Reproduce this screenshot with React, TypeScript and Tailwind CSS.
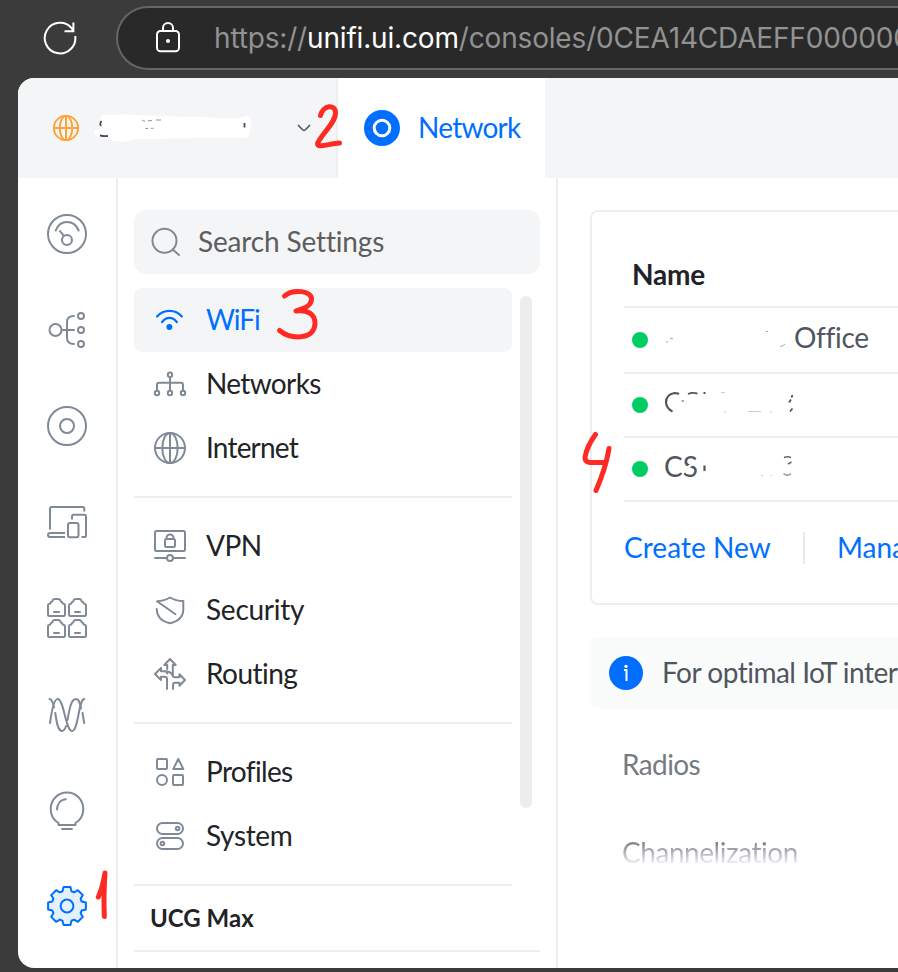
import type { ReactNode } from "react";

const GREY = "#7f8a96";
const BLUE = "#006fff";

function Icon({ size, color = GREY, children }: { size: number; color?: string; children: ReactNode }) {
  return (
    <svg
      width={size}
      height={size}
      viewBox={`0 0 ${size} ${size}`}
      fill="none"
      stroke={color}
      strokeWidth={2}
      strokeLinecap="round"
      strokeLinejoin="round"
      className="block shrink-0 overflow-visible"
    >
      {children}
    </svg>
  );
}

function gearPath() {
  const points: string[] = [];
  for (let k = 0; k < 8; k++) {
    const steps: [number, number][] = [[-17, 15.4], [-10.5, 19.2], [10.5, 19.2], [17, 15.4]];
    for (const [deg, r] of steps) {
      const a = ((k * 45 + deg - 90) * Math.PI) / 180;
      points.push(`${(20 + r * Math.cos(a)).toFixed(2)} ${(20 + r * Math.sin(a)).toFixed(2)}`);
    }
  }
  return `M${points.join("L")}Z`;
}

const PORT = "M1 16.5V7.5Q1 6 3.3 5.6Q3.8 3.6 5.3 3.2Q5.800 1 8 1H11Q13.200 1 13.700 3.200Q15.200 3.600 15.700 5.600Q18 6 18 7.500V16.500q0 1.500-1.500 1.500H2.500Q1 18 1 16.500ZM7 14h5";

const railIcons: ReactNode[] = [
  <Icon size={40} key="dashboard">
    <circle cx="20" cy="20" r="19" />
    <circle cx="20" cy="26" r="5" />
    <path d="M8.700 16.500C13 5.200 27 5.200 31.700 16.500M13 17l3.600 4.600" />
  </Icon>,
  <Icon size={40} key="topology">
    <circle cx="8.500" cy="20" r="6" />
    <circle cx="34" cy="6" r="3" />
    <circle cx="34" cy="20" r="3" />
    <circle cx="34" cy="34" r="3" />
    <path d="M15 20h12M27 6q-7 0-7 6v16q0 6 7 6" />
  </Icon>,
  <Icon size={40} key="devices">
    <circle cx="20" cy="20" r="19" />
    <circle cx="20" cy="20" r="7" />
  </Icon>,
  <Icon size={40} key="clients">
    <path d="M3 27.500V6.500q0-1.500 1.500-1.500h31.300q1.500 0 1.500 1.500V9.500M18 31H3q-2 0-2 2t2 2h15M25 17.500V14.200q0-1.500 1.500-1.500h11q1.500 0 1.500 1.500V33.500q0 1.500-1.500 1.500H34.500" strokeLinecap="butt" />
    <rect x="21" y="21" width="10.500" height="14.200" rx="2" />
  </Icon>,
  <Icon size={40} key="ports">
    <path d={PORT} />
    <path d={PORT} transform="translate(21 0)" />
    <path d={PORT} transform="translate(0 21)" />
    <path d={PORT} transform="translate(21 21)" />
  </Icon>,
  <Icon size={40} key="radios">
    <path d="M3 29C5 14 7.500 5 10.700 5C17 5 18.500 37 25 37C31.500 37 31.500 5 37.300 5" />
    <path d="M2.500 5C5.500 5 6 10 7 13.500M8.300 19C9.500 28 11 37 15 37C17 37 18 35 19 32M20.500 26C22.500 15 24 5 29 5C32.500 5 33 10 34 14.500M35.500 19L37.200 29" />
  </Icon>,
  <Icon size={40} key="insights">
    <path d="M11.500 35V33C6.500 30 3.700 25 3.700 18.700a16.300 16.300 0 0 1 32.600 0C36.300 25 33.500 30 28.500 33V35ZM14.300 39H25.700M10 20.300C10 14 13.500 9.500 19.500 9" strokeLinecap="butt" />
  </Icon>,
  <Icon size={40} color={BLUE} key="settings">
    <path d={gearPath()} fill="#e3f0fd" />
    <circle cx="20" cy="20" r="6.400" />
  </Icon>,
];

const globe = (
  <>
    <circle cx="16" cy="16" r="15" />
    <ellipse cx="16" cy="16" rx="7.700" ry="15" />
    <path d="M16 1v30M1 16h30" />
  </>
);

type Item = { label: string; track: string; active?: boolean; icon: ReactNode };

const groups: Item[][] = [
  [
    {
      label: "WiFi",
      track: "tracking-[-1.1px]",
      active: true,
      icon: (
        <Icon size={32} color={BLUE}>
          <path d="M3 12.500C9.500 5 21.500 5 27.900 12.500M8 18.200C12 12.500 19 12.500 22.900 18.200" strokeWidth="2.200" />
          <circle cx="15.400" cy="23" r="3" fill={BLUE} stroke="none" />
        </Icon>
      ),
    },
    {
      label: "Networks",
      track: "tracking-[-0.65px]",
      icon: (
        <Icon size={32}>
          <circle cx="16" cy="6.700" r="2.200" />
          <circle cx="3" cy="25" r="2.200" />
          <circle cx="16" cy="25" r="2.200" />
          <circle cx="29" cy="25" r="2.200" />
          <path d="M16 9v13.500M3 22.500V16.700q0-2 2-2h22q2 0 2 2V22.500" />
        </Icon>
      ),
    },
    { label: "Internet", track: "tracking-[-0.8px]", icon: <Icon size={32}>{globe}</Icon> },
  ],
  [
    {
      label: "VPN",
      track: "tracking-[-0.5px]",
      icon: (
        <Icon size={32}>
          <rect x="1" y="1" width="30" height="20" rx="1.500" />
          <rect x="11" y="9" width="10" height="8" rx="1.500" />
          <path d="M12.500 9V8a3.500 3.500 0 0 1 7 0v1M1 28h11.500M19.500 28H31" />
          <circle cx="16" cy="28" r="3" />
        </Icon>
      ),
    },
    {
      label: "Security",
      track: "tracking-[-0.25px]",
      icon: (
        <Icon size={32}>
          <path d="M21.500 20.200L3 7.200C8 7 12 6 16 3.500C20 6 24 7 29.300 7V15C29.300 23 24 27.500 16 29.200C8 27.500 3 23 2.800 15" />
        </Icon>
      ),
    },
    {
      label: "Routing",
      track: "tracking-[-0.55px]",
      icon: (
        <Icon size={32}>
          <path d="M13 31V21q0-2.300-2.300-2.300H7V22L1 16L7 10V13.200H10Q13.200 13.200 13.200 15.500M13.200 11V7H10.300L16 1L21.700 7H18.800V17q0 2.300 2 2.300H25.500V16.300L31 22L25.500 27.700V24.700H21q-2 0-2 2V31M11 13.200Q17 13.200 18.800 18" />
        </Icon>
      ),
    },
  ],
  [
    {
      label: "Profiles",
      track: "tracking-[-0.65px]",
      icon: (
        <Icon size={32}>
          <rect x="3" y="3" width="10" height="10" rx="1" />
          <path d="M24.300 3L29.300 13H19.300Z" />
          <circle cx="8" cy="24" r="5" />
          <rect x="19" y="19" width="10" height="10" rx="1" />
        </Icon>
      ),
    },
    {
      label: "System",
      track: "tracking-[-0.35px]",
      icon: (
        <Icon size={32}>
          <rect x="3" y="3" width="26" height="11" rx="5.500" />
          <rect x="3" y="18" width="26" height="11" rx="5.500" />
          <circle cx="23.600" cy="8.500" r="1.800" />
          <circle cx="8.400" cy="23.500" r="1.800" />
        </Icon>
      ),
    },
  ],
];

function BrowserBar() {
  return (
    <div className="flex h-[78px] pt-1.5">
      <div className="w-[116px] shrink-0 pl-[42px] pt-[14px]">
        <svg width="36" height="36" viewBox="42 20 36 36" fill="none" stroke="white" strokeWidth="2">
          <path d="M75.200 36A15.300 15.300 0 1 1 71.800 28.300L73.600 30.800M73.400 22.500V31.200H64.500" />
        </svg>
      </div>
      <div className="flex h-16 flex-1 items-center overflow-hidden rounded-l-full border-2 border-r-0 border-[#666] bg-[#292929] pl-[38px]">
        <svg width="24" height="32" viewBox="156 22 24 32" fill="none" stroke="white" strokeWidth="2" className="shrink-0">
          <rect x="157" y="31" width="22" height="20.300" rx="3.500" />
          <path d="M163 31V28a5 5 0 0 1 10 0v3" />
          <circle cx="168" cy="41" r="2" fill="white" stroke="none" />
        </svg>
        <div className="ml-[34px] whitespace-nowrap font-['Inter',sans-serif] text-[28px] leading-8 tracking-[-0.17px] text-[#929292]">
          <span>https://</span>
          <span className="text-white">unifi.ui.com</span>
          <span>/consoles/0CEA14CDAEFF000000</span>
        </div>
      </div>
    </div>
  );
}

function AppHeader() {
  return (
    <header className="flex h-[100px] bg-[#f4f5f7]">
      <div className="flex w-80 items-center border-r-2 border-[#eeeff1] pl-[35px]">
        <svg width="26" height="26" viewBox="0 0 32 32" fill="none" stroke="#ffa235" strokeWidth="2.400">
          {globe}
        </svg>
        <svg width="158" height="30" viewBox="93 112 158 30" className="ml-[14px]">
          <path
            d="M101 114Q130 112.500 157 115L200 116L230 117.300L240 117.300Q245 113.500 250.500 116.500Q252 127 248 136.500L200 137.300L136 138L123 140.700Q109 141 103 135L95 134Q93 131 95 129.500L99 129Z"
            fill="white"
          />
          <path d="M101.500 120q-2 2.500-.5 5M100 134.300q3.500 1.200 8 .7M244.500 122v4.500" stroke="#444b57" strokeWidth="1.800" fill="none" />
          <path d="M142 119l3 1.500M145.500 127.500h2.500M151 127.300h2.500M148 119.700h4M156 119h5" stroke="#8d939b" strokeWidth="1" fill="none" />
        </svg>
        <svg width="14" height="8" viewBox="0 0 14 8" className="ml-[46px]" fill="none" stroke="#505864" strokeWidth="1.700" strokeLinecap="round">
          <path d="M1.500 1.500Q6 6.500 7 6.500T12.500 1.500" />
        </svg>
      </div>
      <div className="flex w-[207px] items-center bg-white pl-[26px]">
        <svg width="36" height="36" viewBox="0 0 36 36">
          <circle cx="18" cy="18" r="18" fill={BLUE} />
          <circle cx="18" cy="18" r="7.800" fill="none" stroke="white" strokeWidth="3" />
        </svg>
        <span className="-mt-0.5 ml-[18px] text-[28px] leading-8 tracking-[-0.75px] text-[#006fff]">Network</span>
      </div>
    </header>
  );
}

function SettingsMenu() {
  return (
    <nav className="w-[440px] shrink-0 overflow-hidden border-r-2 border-[#eeeeef] pl-4 pt-8">
      <div className="flex h-16 w-[406px] items-center rounded-xl bg-[#f4f5f7] pl-4">
        <svg width="32" height="32" viewBox="150 226 32 32" fill="none" stroke={GREY} strokeWidth="2" strokeLinecap="round">
          <circle cx="164.500" cy="240.700" r="12" />
          <path d="M173 249.700L179 255" />
        </svg>
        <span className="-mt-0.5 ml-4 text-[28px] leading-8 tracking-[-0.15px] text-[#5d5d5d]">Search Settings</span>
      </div>
      <div className="mt-3.5 flex">
        <div className="w-[378px]">
          {groups.map((group, g) => (
            <div key={g} className="mb-4 border-b-2 border-[#eeeeef] pb-4">
              {group.map((item) => (
                <div
                  key={item.label}
                  className={
                    item.active
                      ? "flex h-16 items-center rounded-lg bg-[#f4f5f7] pl-5 text-[#006fff]"
                      : "flex h-16 items-center pl-5 text-[#212327]"
                  }
                >
                  {item.icon}
                  <span className={`-mt-0.5 ml-5 text-[28px] leading-8 ${item.track}`}>{item.label}</span>
                </div>
              ))}
            </div>
          ))}
        </div>
        <div className="ml-2 mt-2 h-[512px] w-3 rounded-full bg-[#ededee]" />
      </div>
      <div className="-mt-4 flex h-[66px] w-[406px] items-center border-b-2 border-[#eeeeef] pl-4 text-2xl font-bold text-[#212327]">
        UCG Max
      </div>
    </nav>
  );
}

function NetworkRow({ height, children }: { height: string; children: ReactNode }) {
  return (
    <div className={`flex items-center border-b-2 border-[#eeeeef] pl-2 ${height}`}>
      <span className="size-4 shrink-0 rounded-full bg-[#00cc66]" />
      {children}
    </div>
  );
}

function Content() {
  return (
    <main className="flex-1 overflow-hidden whitespace-nowrap pl-8 pt-8 text-[28px] leading-8 text-[#50565e]">
      <section className="h-[395px] rounded-l-lg border-2 border-r-0 border-[#eeeeef] pl-8">
        <div className="flex h-24 items-end border-b-2 border-[#eeeeef] pb-4 pl-2 font-bold tracking-[-0.2px] text-[#212327]">
          Name
        </div>
        <NetworkRow height="h-[66px]">
          <svg width="122" height="32" viewBox="664 324 122 32" fill="none" stroke="#a4a8ad" strokeWidth="1" className="ml-4">
            <path d="M666 342.500l2-1M670 338.200l3 .5M766 331.500h2M780 346.500q3 0 5-2.500" />
          </svg>
          <span className="-mt-1.5 ml-2 tracking-[-0.3px]">Office</span>
        </NetworkRow>
        <NetworkRow height="h-16">
          <svg width="136" height="32" viewBox="664 389 136 32" fill="none" stroke="#50565e" strokeWidth="2.200" className="ml-4">
            <path d="M679 394Q677 393 674.500 393Q666 394.500 666 402.500Q666.500 408.500 672.500 411.500" />
            <path d="M688 394q4.500-2 9.500-.3M703.500 393h2M792.500 395l-1 2.500M791 399.500l-2 3M792.500 408.500l-2.500 3" strokeWidth="1.800" />
            <path d="M681.500 401h2.500" strokeWidth="1" />
            <path d="M721 392.500h4M748 411.500h13M770 412h2M724 412h2" stroke="#c9cbce" strokeWidth="1" />
          </svg>
        </NetworkRow>
        <NetworkRow height="h-16">
          <div className="relative ml-4 h-8 w-[136px]">
            <div className="-mt-[3px]">CS</div>
            <svg width="136" height="32" viewBox="664 453 136 32" fill="none" className="absolute left-0 top-0">
              <path d="M683 471L691 465L703 460M686 473L694 470" stroke="white" strokeWidth="2.500" />
              <path d="M704.500 465.500v5.500" stroke="#50565e" strokeWidth="2.200" />
              <path d="M784 457.500q3.500-1.500 7 0M791.500 462l-3.500 2" stroke="#62686f" strokeWidth="1.600" />
              <path d="M783.500 473.500q4 3.500 7.500 0" stroke="#8b9096" strokeWidth="1.400" />
              <path d="M761 475.500h2M770 475.500h2" stroke="#d2d4d6" strokeWidth="1" />
            </svg>
          </div>
        </NetworkRow>
        <div className="flex h-[92px] items-center text-[#006fff]">
          <span className="-mt-0.5 w-[179px] shrink-0 tracking-[0.05px]">Create New</span>
          <span className="h-8 w-0.5 shrink-0 bg-[#e9eaec]" />
          <span className="-mt-0.5 ml-8">Mana</span>
        </div>
      </section>
      <section className="mt-8 flex h-[72px] items-center rounded-l-lg bg-[#fafbfb] pl-[19px]">
        <svg width="34" height="34" viewBox="0 0 34 34" className="shrink-0">
          <circle cx="17" cy="17" r="17" fill={BLUE} />
          <circle cx="17" cy="10.300" r="1.600" fill="white" />
          <path d="M15 14h2.500v11" stroke="white" strokeWidth="2" fill="none" />
        </svg>
        <span className="-mt-0.5 ml-[19px] tracking-[-0.5px]">For optimal IoT inter</span>
      </section>
      <div className="ml-8 mt-[39px] tracking-[-0.6px] text-[#757b83]">Radios</div>
      <div className="ml-8 mt-14 w-fit bg-linear-to-b from-[#757b83] from-15% to-white to-95% bg-clip-text tracking-[-0.45px] text-transparent">
        Channelization
      </div>
    </main>
  );
}

/* Red freehand marker strokes that number the four steps. */
function Markers() {
  return (
    <svg
      width="898"
      height="972"
      viewBox="0 0 898 972"
      fill="none"
      stroke="#ff2a23"
      strokeLinecap="round"
      strokeLinejoin="round"
      className="pointer-events-none absolute left-0 top-0"
    >
      <path strokeWidth="5" d="M98.300 897Q102.500 888 105 873Q103.500 893 104.300 916.500" />
      <path strokeWidth="5" d="M320.500 115.500C323 105 335.500 103.500 335.500 113C335.500 123 321.500 134 317.500 143.500C316.500 148.500 328 144 339.500 143" />
      <path strokeWidth="5" d="M284.500 296C292 289 313 290 311.500 300C310.500 307 302 309 296 311C307 309.500 315.500 314 315 324C314 341 290 339 279.500 330.500" />
      <path strokeWidth="5" d="M595.500 434.500C590 442 586 451 585 457.500C585 464.500 593 462 604 462.500M609 448.500C606 467 601 479 596 490.500" />
    </svg>
  );
}

export default function App() {
  return (
    <div className="relative h-[972px] w-full overflow-hidden bg-[#3b3b3b] font-['Lato','Open_Sans',sans-serif] [font-variant-ligatures:none]">
      <BrowserBar />
      <div className="ml-[18px] flex h-[890px] flex-col overflow-hidden rounded-l-2xl bg-white">
        <AppHeader />
        <div className="flex min-h-0 flex-1">
          <aside className="flex w-[100px] shrink-0 flex-col gap-14 border-r-2 border-[#eeeeef] pl-[29px] pt-9">{railIcons}</aside>
          <SettingsMenu />
          <Content />
        </div>
      </div>
      <Markers />
    </div>
  );
}
